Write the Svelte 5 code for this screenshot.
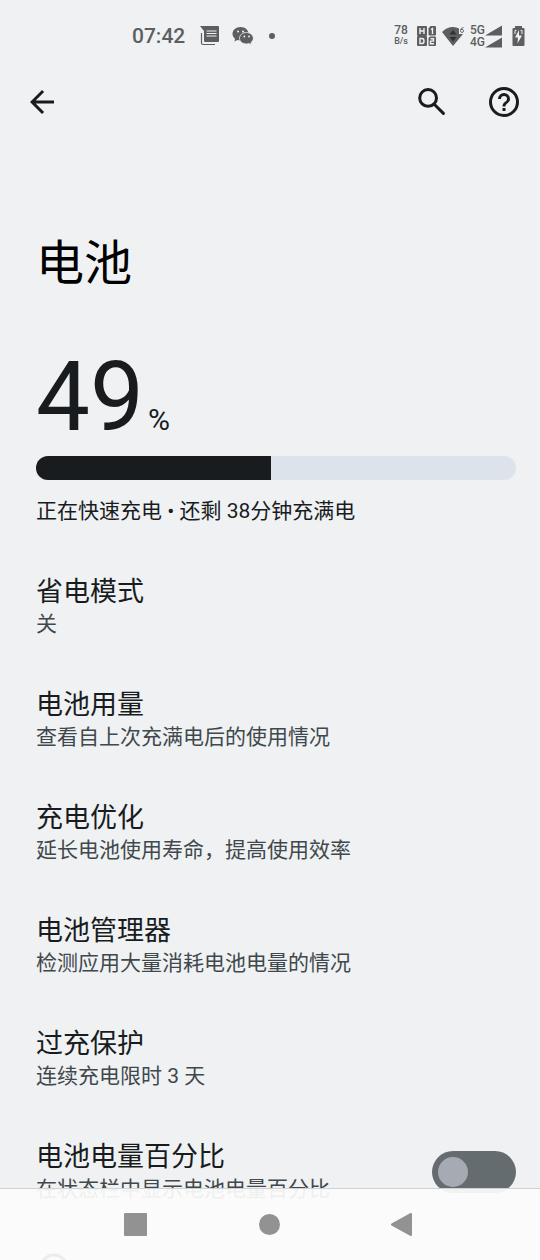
<script>
    let level = $state(49);
    let showPercent = $state(false);

    const items = [
        { title: "省电模式", summary: "关" },
        { title: "电池用量", summary: "查看自上次充满电后的使用情况" },
        { title: "充电优化", summary: "延长电池使用寿命，提高使用效率" },
        { title: "电池管理器", summary: "检测应用大量消耗电池电量的情况" },
        { title: "过充保护", summary: "连续充电限时 3 天" },
    ];
</script>

<div class="screen" lang="zh-CN">
    <div class="status">
        <div class="status-left">
            <span class="time">07:42</span>
            <svg class="message" width="20" height="22" viewBox="0 0 20 22">
                <path d="M0 1h18q1 0 1 1v14q0 1-1 1H5q-1 0-1-1V6z" fill="currentColor" />
                <path d="M1.500 8v10q0 1.500 1.500 1.500h12" fill="none" stroke="currentColor" stroke-width="1.200" />
                <path d="M6.500 6h10M6.500 8.500h10M6.500 11h10" stroke="#eff1f3" stroke-width="1.200" />
            </svg>
            <svg width="22" height="20" viewBox="0 0 22 20">
                <path d="M8.500 1C4 1 .5 4 .5 7.800c0 2 1 3.700 2.600 5L2.400 15.500l3-1.500c1 .3 2 .4 3.100.4C13 14.400 16.500 11.500 16.500 7.700S13 1 8.500 1z" fill="currentColor" />
                <path d="M14.500 6.500c-4 0-7 2.600-7 5.800s3 5.700 7 5.700c.9 0 1.700-.1 2.500-.4l2.400 1.300-.6-2.100c1.500-1.100 2.500-2.700 2.500-4.500 0-3.200-3-5.800-6.800-5.800z" fill="currentColor" stroke="#eff1f3" stroke-width=".8" />
                <g fill="#eff1f3">
                    <circle cx="6" cy="5.500" r="1" />
                    <circle cx="11" cy="5.500" r="1" />
                    <circle cx="12.300" cy="10.500" r=".9" />
                    <circle cx="17" cy="10.500" r=".9" />
                </g>
            </svg>
            <span class="dot"></span>
        </div>
        <div class="status-right">
            <div class="speed"><span>78</span><small>B/s</small></div>
            <svg class="hd" width="20" height="22" viewBox="0 0 20 22">
                <g fill="currentColor">
                    <rect x="0" y="1" width="10" height="10" rx="1" />
                    <path d="M13.500 1H18q1 0 1 1v7.500q0 1-1 1h-5.500q-1 0-1-1V3.500z" />
                    <rect x="0" y="11" width="10" height="10" rx="1" />
                    <path d="M13 11.500h5q1 0 1 1V20q0 1-1 1h-5.500q-1 0-1-1v-7z" />
                </g>
                <path d="M3 3v6M7 3v6M3 6h4M14 4.500l1.500-1V9M3 13.500h2q2 0 2 2.500t-2 2.500H3zM13.500 13.800h3v2.300h-3v2.600h3.500" fill="none" stroke="#eff1f3" stroke-width="1.400" />
            </svg>
            <svg class="wifi" width="24" height="22" viewBox="0 0 24 22">
                <path d="M0 7Q5 2 11 2q3.500 0 6 1.500V9h4L11 21z" fill="currentColor" />
                <path d="M7.500 9.500 11 5l3.500 4.500zM7.500 12h7L11 16.500z" fill="#303133" />
                <path d="M21.500 2.500q-3 .3-3 3.200 0 1.800 1.500 1.800t1.500-1.600-1.500-1.600q-1 0-1.500 1" fill="none" stroke="currentColor" stroke-width=".9" />
            </svg>
            <div class="network"><span>5G</span><span>4G</span></div>
            <svg class="signal" width="18" height="24" viewBox="0 0 18 24">
                <path d="M17 1.500v10H0zM17 13.500v10H0z" fill="currentColor" />
            </svg>
            <svg class="charging" width="13" height="22" viewBox="0 0 13 22">
                <path d="M3 1h7v2h1.500q1 0 1 1v16q0 1-1 1h-10q-1 0-1-1V4q0-1 1-1H3z" fill="currentColor" />
                <path d="M7 5 3 12.500h3L5.500 18.500 10 10.500H7z" fill="#eff1f3" />
                <path d="M3 9V5.500h1.500M8.500 5.500H10V9" fill="none" stroke="#eff1f3" />
            </svg>
        </div>
    </div>

    <header class="toolbar">
        <button aria-label="返回">
            <svg width="36" height="36" viewBox="0 0 24 24"><path d="M20 11H7.800l5.600-5.600L12 4l-8 8 8 8 1.400-1.400L7.800 13H20z" fill="currentColor" /></svg>
        </button>
        <div class="actions">
            <button aria-label="搜索">
                <svg width="36" height="36" viewBox="0 0 24 24"><path d="m14 14 5.600 5.600M15 9.300A5.600 5.600 0 1 1 3.800 9.300 5.600 5.600 0 0 1 15 9.300z" fill="none" stroke="currentColor" stroke-width="2" stroke-linecap="round" /></svg>
            </button>
            <button aria-label="帮助">
                <svg width="36" height="36" viewBox="0 0 24 24"><path d="M11 18h2v-2h-2zm1-16a10 10 0 1 0 0 20 10 10 0 0 0 0-20zm0 18a8 8 0 1 1 0-16 8 8 0 0 1 0 16zm0-14a4 4 0 0 0-4 4h2a2 2 0 1 1 4 0c0 2-3 1.750-3 5h2c0-2.250 3-2.500 3-5a4 4 0 0 0-4-4z" fill="currentColor" /></svg>
            </button>
        </div>
    </header>

    <main>
        <h1>电池</h1>

        <section class="usage">
            <div class="level">{level}<span>%</span></div>
            <div class="bar" role="progressbar" aria-label="电池电量" aria-valuenow={level}>
                <div class="fill" style="width: {level}%"></div>
            </div>
            <p>正在快速充电 • 还剩 38分钟充满电</p>
        </section>

        {#each items as item}
            <a class="item" href="#settings">
                <span class="title">{item.title}</span>
                <span class="summary">{item.summary}</span>
            </a>
        {/each}

        <label class="item switch-item">
            <span class="text">
                <span class="title">电池电量百分比</span>
                <span class="summary">在状态栏中显示电池电量百分比</span>
            </span>
            <input type="checkbox" role="switch" bind:checked={showPercent} />
        </label>

        <div class="footnote">
            <svg width="36" height="36" viewBox="0 0 36 36">
                <circle cx="18" cy="18" r="13" fill="none" stroke="currentColor" stroke-width="3" />
                <path d="M18 16v9M18 11v3" stroke="currentColor" stroke-width="3" />
            </svg>
        </div>
    </main>

    <nav>
        <button aria-label="最近任务">
            <svg width="24" height="24" viewBox="0 0 24 24"><rect x="0" y="0" width="23" height="23" rx="1" fill="currentColor" /></svg>
        </button>
        <button aria-label="主屏幕">
            <svg width="24" height="24" viewBox="0 0 24 24"><circle cx="11.500" cy="11.500" r="10.500" fill="currentColor" /></svg>
        </button>
        <button aria-label="返回上一级">
            <svg width="28" height="24" viewBox="0 0 28 24"><path d="M2 11.500 21 1v21z" fill="currentColor" stroke="currentColor" stroke-width="2" stroke-linejoin="round" /></svg>
        </button>
    </nav>
</div>

<style>
    :global(body) {
        background: #eff1f3;
    }

    .screen {
        position: relative;
        height: 100vh;
        overflow: hidden;
        background: #eff1f3;
        color: #191c1e;
        font-family: Roboto, "Noto Sans CJK SC", sans-serif;
    }

    svg {
        display: block;
        flex: none;
    }

    button {
        display: flex;
        align-items: center;
        justify-content: center;
        padding: 0;
        border: none;
        background: none;
        color: inherit;
        cursor: pointer;
    }

    .status {
        display: flex;
        justify-content: space-between;
        height: 72px;
        padding: 0 15px 0 132px;
        color: #5c5e60;
    }

    .status-left,
    .status-right {
        display: flex;
        align-items: center;
    }

    .status-left {
        gap: 12px;
    }

    .time {
        margin-right: 3px;
        font-size: 21px;
        font-weight: 500;
    }

    .dot {
        width: 6px;
        height: 6px;
        margin-left: 3px;
        border-radius: 50%;
        background: currentColor;
    }

    .speed {
        display: flex;
        flex-direction: column;
        align-items: center;
        margin-right: 9px;
        font-size: 12px;
        font-weight: 500;
        line-height: 11px;
    }

    .speed small {
        font-size: 9px;
    }

    .wifi {
        margin: 0 4px 0 5px;
    }

    .network {
        display: flex;
        flex-direction: column;
        font-size: 12px;
        font-weight: 500;
        line-height: 12px;
    }

    .charging {
        margin-left: 9px;
    }

    .toolbar {
        display: flex;
        align-items: center;
        justify-content: space-between;
        height: 60px;
        padding: 0 18px 0 24px;
    }

    .actions {
        display: flex;
        gap: 36px;
    }

    main {
        padding-top: 100px;
    }

    h1 {
        margin: 0 36px;
        color: #000;
        font-size: 48px;
        font-weight: 400;
        line-height: 64px;
    }

    .usage {
        padding: 53px 24px 24px 36px;
    }

    .level {
        font-size: 96px;
        line-height: 96px;
    }

    .level span {
        margin-left: 4px;
        font-size: 30px;
        line-height: 30px;
    }

    .bar {
        height: 24px;
        margin-top: 11px;
        border-radius: 12px;
        overflow: hidden;
        background: #dce3eb;
    }

    .fill {
        height: 100%;
        background: #191c1e;
    }

    p {
        margin: 16px 0 0;
        font-size: 21px;
        line-height: 30px;
    }

    .item {
        display: block;
        padding: 24px 24px 24px 36px;
        color: inherit;
        text-decoration: none;
    }

    .title,
    .summary {
        display: block;
    }

    .title {
        font-size: 27px;
        line-height: 36px;
    }

    .summary {
        color: #40484c;
        font-size: 21px;
        line-height: 29px;
    }

    .switch-item {
        display: flex;
        align-items: center;
        justify-content: space-between;
    }

    input {
        appearance: none;
        width: 84px;
        height: 42px;
        margin: 0;
        padding: 6px;
        box-sizing: border-box;
        border-radius: 21px;
        background: #646c6f;
        cursor: pointer;
    }

    input::before {
        content: "";
        display: block;
        width: 30px;
        height: 30px;
        border-radius: 50%;
        background: #a6abb3;
    }

    input:checked::before {
        margin-left: auto;
    }

    .footnote {
        padding: 22px 36px;
    }

    nav {
        position: absolute;
        right: 0;
        bottom: 0;
        left: 0;
        display: flex;
        justify-content: center;
        height: 72px;
        box-sizing: border-box;
        border-top: 1px solid #cfd1d3;
        background: rgba(252, 252, 252, 0.93);
        color: #929292;
    }

    nav button {
        width: 134px;
    }
</style>
